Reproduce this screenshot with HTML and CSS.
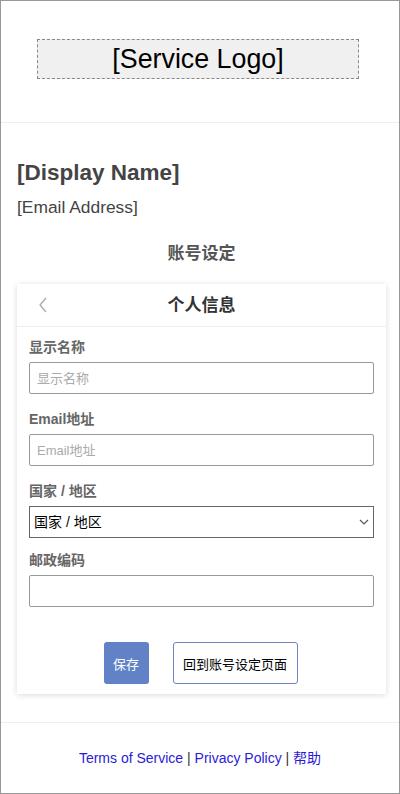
FILE: index.html
```html
<!DOCTYPE html>
<html lang="zh">
<head>
<meta charset="utf-8">
<title>个人信息</title>
<link rel="stylesheet" href="styles.css">
</head>
<body>
<div class="page">
  <header class="header">
    <div class="logo">[Service Logo]</div>
  </header>
  <main class="main">
    <h1 class="name">[Display Name]</h1>
    <div class="email">[Email Address]</div>
    <h2 class="section-title">账号设定</h2>
    <div class="card">
      <div class="card-head">
        <svg class="back" width="10" height="16" viewBox="0 0 10 16"><path d="M8 1 L2 8 L8 15" fill="none" stroke="#aaa" stroke-width="1.3"/></svg>
        <span class="card-title">个人信息</span>
      </div>
      <form class="card-body">
        <div class="field">
          <label class="label">显示名称</label>
          <input class="input" type="text" placeholder="显示名称">
        </div>
        <div class="field">
          <label class="label">Email地址</label>
          <input class="input" type="text" placeholder="Email地址">
        </div>
        <div class="field field-select">
          <label class="label">国家 / 地区</label>
          <div class="select-wrap">
            <select class="select"><option>国家 / 地区</option></select>
            <svg class="caret" width="10" height="6" viewBox="0 0 10 6"><path d="M1 1 L5 5 L9 1" fill="none" stroke="#555" stroke-width="1.2"/></svg>
          </div>
        </div>
        <div class="field">
          <label class="label">邮政编码</label>
          <input class="input" type="text">
        </div>
        <div class="actions">
          <button type="button" class="btn btn-primary">保存</button>
          <button type="button" class="btn btn-outline">回到账号设定页面</button>
        </div>
      </form>
    </div>
  </main>
  <footer class="footer">
    <a href="#">Terms of Service</a> | <a href="#">Privacy Policy</a> | <a href="#">帮助</a>
  </footer>
</div>
</body>
</html>
```
FILE: styles.css
```css
* { box-sizing: border-box; }
html, body { margin: 0; padding: 0; }
body {
  font-family: "Liberation Sans", Arial, "Noto Sans CJK SC", sans-serif;
  color: #444;
  background: #fff;
}
.page {
  width: 400px;
  height: 794px;
  border: 1px solid #999;
  display: flex;
  flex-direction: column;
}
.header {
  height: 122px;
  padding-top: 38px;
  border-bottom: 1px solid #eee;
}
.logo {
  margin-left: 36px;
  width: 322px;
  height: 40px;
  border: 1px dashed #888;
  background: #f0f0f0;
  color: #000;
  font-size: 26.8px;
  line-height: 39px;
  text-align: center;
}
.main {
  padding: 0 13px 0 16px;
  flex: 1;
  border-bottom: 1px solid #eee;
}
.name {
  margin: 36px 0 0;
  font-size: 22.5px;
  line-height: 28px;
  font-weight: bold;
  color: #444;
}
.email {
  margin-top: 10px;
  font-size: 17.4px;
  line-height: 21px;
  color: #444;
}
.section-title {
  margin: 25px 0 0;
  font-size: 17px;
  line-height: 22px;
  font-weight: bold;
  text-align: center;
  color: #555;
}
.card {
  margin-top: 19px;
  background: #fff;
  box-shadow: 0 1px 6px rgba(0,0,0,0.15);
}
.card-head {
  position: relative;
  height: 43px;
  padding-bottom: 3px;
  border-bottom: 1px solid #eee;
  display: flex;
  align-items: center;
  justify-content: center;
}
.back {
  position: absolute;
  left: 21px;
  top: 13px;
}
.card-title {
  font-size: 17px;
  font-weight: bold;
  color: #333;
}
.card-body {
  padding: 11px 12px 10px;
  margin: 0;
}
.field { margin-bottom: 16px; }
.field-select { margin-bottom: 13px; }
.label {
  display: block;
  font-size: 14px;
  line-height: 18px;
  font-weight: bold;
  color: #666;
  margin-bottom: 6px;
}
.input, .select {
  display: block;
  width: 100%;
  height: 32px;
  border: 1px solid #999;
  border-radius: 2px;
  padding: 0 7px;
  font-family: inherit;
  font-size: 13px;
  color: #000;
  background: #fff;
  outline: none;
}
.input::placeholder { color: #aaa; }
.select-wrap { position: relative; }
.select {
  appearance: none;
  -webkit-appearance: none;
  border-color: #666;
  border-radius: 0;
  padding: 0 4px;
  font-size: 14px;
}
.caret {
  position: absolute;
  right: 5px;
  top: 13px;
}
.actions {
  display: flex;
  justify-content: center;
  gap: 24px;
  padding-top: 19px;
  padding-right: 2px;
}
.btn {
  height: 42px;
  font-family: inherit;
  font-size: 13px;
  border-radius: 3px;
  padding: 0;
  cursor: pointer;
}
.btn-primary {
  width: 45px;
  background: #6182c6;
  color: #fff;
  border: none;
}
.btn-outline {
  width: 125px;
  background: #fff;
  color: #000;
  border: 1px solid #6b85c4;
}
.footer {
  height: 70px;
  text-align: center;
  font-size: 14px;
  line-height: 70px;
  color: #333;
}
.footer a {
  color: #2a1bd6;
  text-decoration: none;
}
```
